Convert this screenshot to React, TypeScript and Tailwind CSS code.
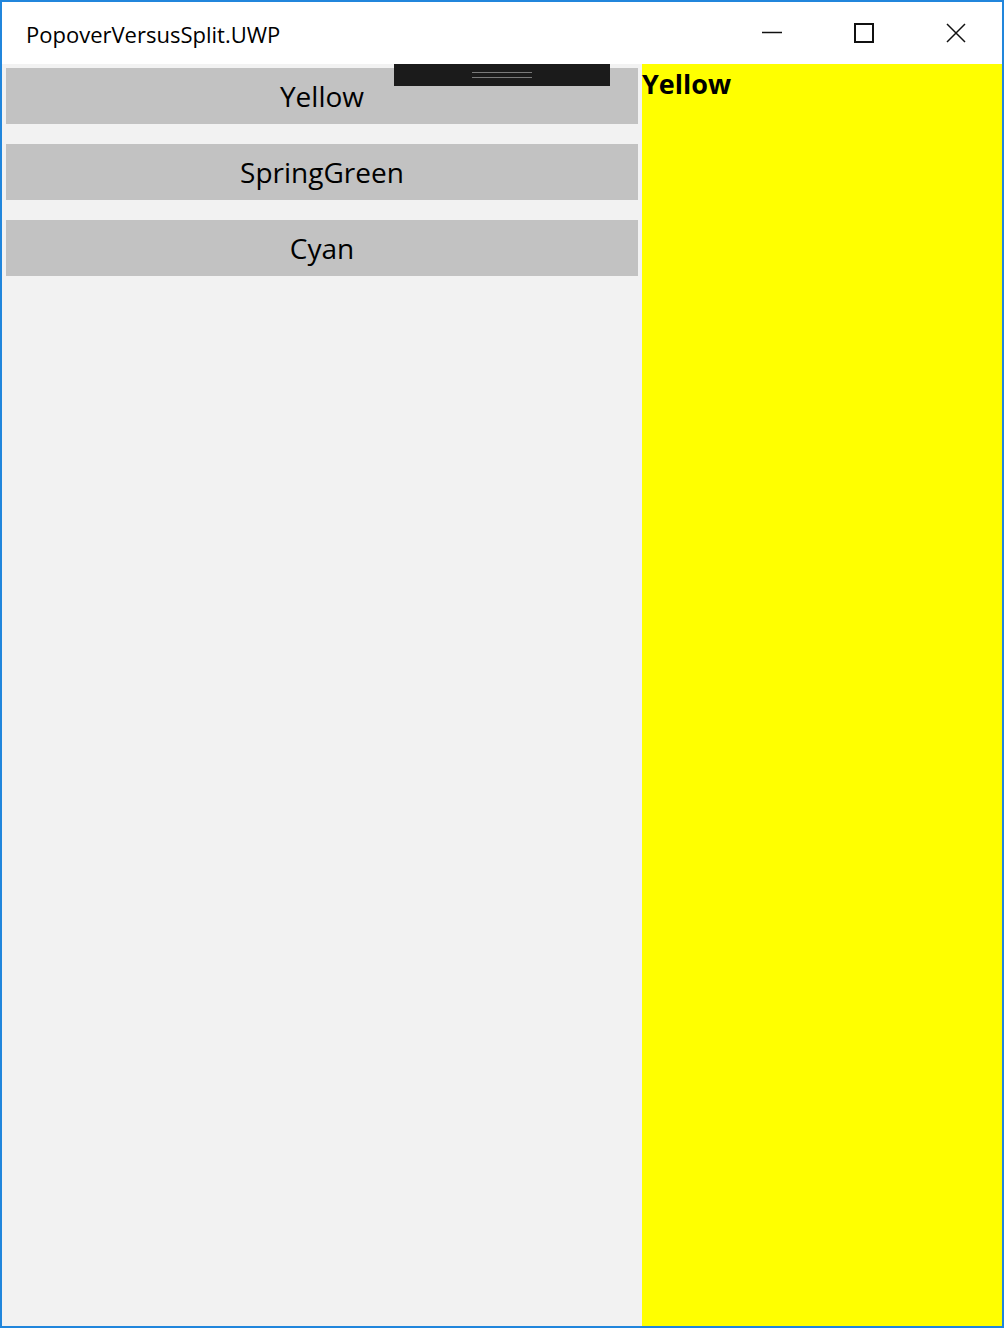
export default function App() {
  const colors = ['Yellow', 'SpringGreen', 'Cyan'];
  return (
    <div
      className="relative w-[1004px] h-[1328px] border-2 border-[#2186dc] flex flex-col bg-white"
      style={{ fontFamily: '"Open Sans", "Noto Sans", sans-serif' }}
    >
      {/* title bar */}
      <div className="h-[62px] flex items-center bg-white">
        <span className="pl-6 pt-[2px] text-[22px] text-black">PopoverVersusSplit.UWP</span>
        <div className="ml-auto flex items-center h-full">
          <div className="w-[92px] h-full flex items-center justify-center">
            <svg width="20" height="20" viewBox="0 0 20 20">
              <path d="M0 9.5h20" stroke="#111" strokeWidth="1.5" fill="none" />
            </svg>
          </div>
          <div className="w-[92px] h-full flex items-center justify-center">
            <svg width="20" height="20" viewBox="0 0 20 20">
              <rect x="1" y="1" width="18" height="18" stroke="#111" strokeWidth="2" fill="none" />
            </svg>
          </div>
          <div className="w-[92px] h-full flex items-center justify-center">
            <svg width="20" height="20" viewBox="0 0 20 20">
              <path d="M1 1L19 19M19 1L1 19" stroke="#111" strokeWidth="1.5" fill="none" />
            </svg>
          </div>
        </div>
      </div>

      {/* content */}
      <div className="flex-1 flex">
        <div className="w-[640px] bg-[#f2f2f2] px-1 pt-1 flex flex-col gap-5">
          {colors.map((c) => (
            <div
              key={c}
              className="h-14 bg-[#c2c2c2] flex items-center justify-center text-[28px] text-black"
            >
              {c}
            </div>
          ))}
        </div>
        <div className="flex-1 bg-[#ffff00]">
          <div className="text-[27px] font-bold leading-none pt-[6px] text-black">Yellow</div>
        </div>
      </div>

      {/* drag handle overlay */}
      <div className="absolute left-[392px] top-[62px] w-[216px] h-[22px] bg-[#1b1b1b] flex flex-col items-center pt-[8px] gap-[4px]">
        <div className="w-[60px] h-px bg-[#7a7a7a]" />
        <div className="w-[60px] h-px bg-[#7a7a7a]" />
      </div>
    </div>
  );
}
